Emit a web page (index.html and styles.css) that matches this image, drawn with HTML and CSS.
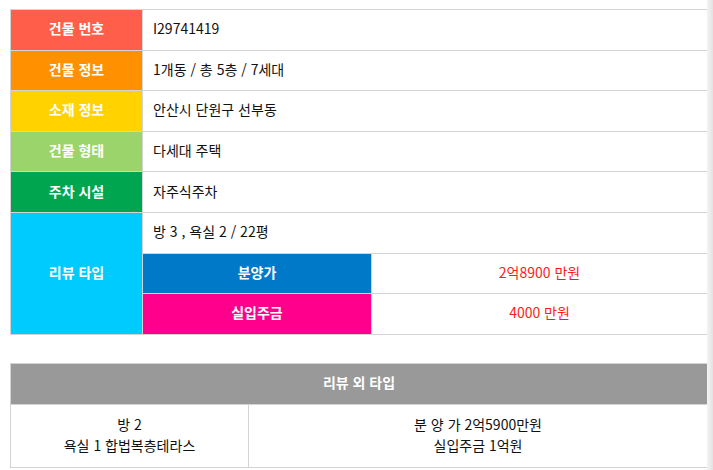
FILE: index.html
```html
<!DOCTYPE html>
<html lang="ko">
    <head>
        <meta charset="UTF-8">
        <meta name="viewport" content="width=device-width, initial-scale=1.0">
        <title>건물 정보</title>
        <link rel="stylesheet" href="styles.css">
    </head>
    <body>
        <div class="page">
            <div class="content">
                <table class="info-table">
                    <colgroup>
                        <col class="col-label">
                        <col class="col-sub">
                        <col class="col-value">
                    </colgroup>
                    <tr>
                        <th class="label red">건물 번호</th>
                        <td class="value" colspan="2">I29741419</td>
                    </tr>
                    <tr>
                        <th class="label orange">건물 정보</th>
                        <td class="value" colspan="2">1개동 / 총 5층 / 7세대</td>
                    </tr>
                    <tr>
                        <th class="label yellow">소재 정보</th>
                        <td class="value" colspan="2">안산시 단원구 선부동</td>
                    </tr>
                    <tr>
                        <th class="label lime">건물 형태</th>
                        <td class="value" colspan="2">다세대 주택</td>
                    </tr>
                    <tr>
                        <th class="label green">주차 시설</th>
                        <td class="value" colspan="2">자주식주차</td>
                    </tr>
                    <tr>
                        <th class="label cyan" rowspan="3">리뷰 타입</th>
                        <td class="value" colspan="2">방 3 , 욕실 2 / 22평</td>
                    </tr>
                    <tr>
                        <th class="label blue">분양가</th>
                        <td class="price">2억8900 만원</td>
                    </tr>
                    <tr>
                        <th class="label pink">실입주금</th>
                        <td class="price">4000 만원</td>
                    </tr>
                </table>

                <table class="other-table">
                    <colgroup>
                        <col class="col-left">
                        <col class="col-right">
                    </colgroup>
                    <tr>
                        <th class="other-head" colspan="2">리뷰 외 타입</th>
                    </tr>
                    <tr>
                        <td class="other-cell">방 2<br>욕실 1 합법복층테라스</td>
                        <td class="other-cell">분 양 가 2억5900만원<br>실입주금 1억원</td>
                    </tr>
                </table>
            </div>
            <div class="edge"></div>
        </div>
    </body>
</html>
```

FILE: styles.css
```css
* {
    margin: 0;
    padding: 0;
    box-sizing: border-box;
}

body {
    background: #fff;
    color: #111;
    font-family: 'Noto Sans CJK KR', 'Noto Sans', sans-serif;
    font-size: 14px;
}

.page {
    display: flex;
    width: 713px;
    min-height: 470px;
}

.content {
    width: 707px;
    padding: 9px 0 0 10px;
}

.edge {
    width: 6px;
    background: linear-gradient(to right, #f4f4f4, #e2e2e2);
}

table {
    width: 697px;
    border-collapse: collapse;
    table-layout: fixed;
}

th, td {
    border: 1px solid #d3d3d3;
    height: 40.6px;
    line-height: 20px;
    padding-bottom: 3px;
}

.col-label { width: 132px; }
.col-sub { width: 229px; }
.col-value { width: 336px; }

.label {
    color: #fff;
    font-weight: 700;
    text-align: center;
}

.red { background: #ff5f4a; }
.orange { background: #ff9000; }
.yellow { background: #ffd200; }
.lime { background: #9bd46a; }
.green { background: #00a64f; }
.cyan { background: #00cbff; }
.blue { background: #0079c9; }
.pink { background: #ff008c; }

.value {
    padding-left: 10px;
    text-align: left;
}

.price {
    color: #ff1a1a;
    text-align: center;
}

.other-table {
    margin-top: 28px;
}

.col-left { width: 238px; }
.col-right { width: 459px; }

.other-head {
    background: #999;
    color: #fff;
    font-weight: 700;
    text-align: center;
    height: 41px;
}

.other-cell {
    height: 63px;
    text-align: center;
    line-height: 21px;
    padding-bottom: 2px;
}
```
